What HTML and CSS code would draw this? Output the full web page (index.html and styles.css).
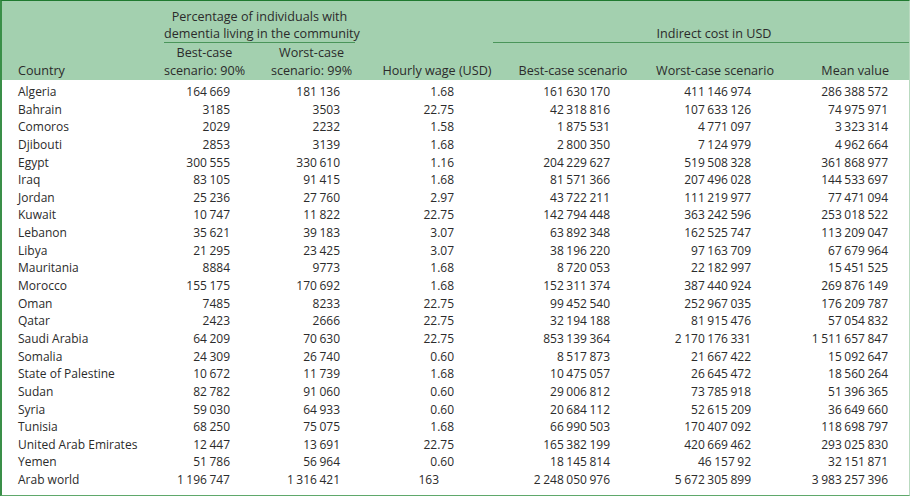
FILE: index.html
```html
<!DOCTYPE html>
<html>
<head>
<meta charset="utf-8">
<link rel="stylesheet" href="styles.css">
</head>
<body>
<div class="frame">
<table class="data">
<colgroup>
<col class="c0"><col class="c1"><col class="c2"><col class="c3"><col class="c4"><col class="c5"><col class="c6">
</colgroup>
<thead>
<tr class="hrow1">
<th rowspan="2" class="h-country">Country</th>
<th colspan="2" class="h-group"><div class="grp1">Percentage of individuals with<br>dementia living in the community</div></th>
<th rowspan="2" class="h-wage">Hourly wage (USD)</th>
<th colspan="3" class="h-group"><div class="grp2">Indirect cost in USD</div></th>
</tr>
<tr class="hrow2">
<th class="h-sub">Best-case<br>scenario: 90%</th>
<th class="h-sub">Worst-case<br>scenario: 99%</th>
<th class="h-sub">Best-case scenario</th>
<th class="h-sub">Worst-case scenario</th>
<th class="h-mean">Mean value</th>
</tr>
</thead>
<tbody>
<tr><td>Algeria</td><td>164 669</td><td>181 136</td><td>1.68</td><td>161 630 170</td><td>411 146 974</td><td>286 388 572</td></tr>
<tr><td>Bahrain</td><td>3185</td><td>3503</td><td>22.75</td><td>42 318 816</td><td>107 633 126</td><td>74 975 971</td></tr>
<tr><td>Comoros</td><td>2029</td><td>2232</td><td>1.58</td><td>1 875 531</td><td>4 771 097</td><td>3 323 314</td></tr>
<tr><td>Djibouti</td><td>2853</td><td>3139</td><td>1.68</td><td>2 800 350</td><td>7 124 979</td><td>4 962 664</td></tr>
<tr><td>Egypt</td><td>300 555</td><td>330 610</td><td>1.16</td><td>204 229 627</td><td>519 508 328</td><td>361 868 977</td></tr>
<tr><td>Iraq</td><td>83 105</td><td>91 415</td><td>1.68</td><td>81 571 366</td><td>207 496 028</td><td>144 533 697</td></tr>
<tr><td>Jordan</td><td>25 236</td><td>27 760</td><td>2.97</td><td>43 722 211</td><td>111 219 977</td><td>77 471 094</td></tr>
<tr><td>Kuwait</td><td>10 747</td><td>11 822</td><td>22.75</td><td>142 794 448</td><td>363 242 596</td><td>253 018 522</td></tr>
<tr><td>Lebanon</td><td>35 621</td><td>39 183</td><td>3.07</td><td>63 892 348</td><td>162 525 747</td><td>113 209 047</td></tr>
<tr><td>Libya</td><td>21 295</td><td>23 425</td><td>3.07</td><td>38 196 220</td><td>97 163 709</td><td>67 679 964</td></tr>
<tr><td>Mauritania</td><td>8884</td><td>9773</td><td>1.68</td><td>8 720 053</td><td>22 182 997</td><td>15 451 525</td></tr>
<tr><td>Morocco</td><td>155 175</td><td>170 692</td><td>1.68</td><td>152 311 374</td><td>387 440 924</td><td>269 876 149</td></tr>
<tr><td>Oman</td><td>7485</td><td>8233</td><td>22.75</td><td>99 452 540</td><td>252 967 035</td><td>176 209 787</td></tr>
<tr><td>Qatar</td><td>2423</td><td>2666</td><td>22.75</td><td>32 194 188</td><td>81 915 476</td><td>57 054 832</td></tr>
<tr><td>Saudi Arabia</td><td>64 209</td><td>70 630</td><td>22.75</td><td>853 139 364</td><td>2 170 176 331</td><td>1 511 657 847</td></tr>
<tr><td>Somalia</td><td>24 309</td><td>26 740</td><td>0.60</td><td>8 517 873</td><td>21 667 422</td><td>15 092 647</td></tr>
<tr><td>State of Palestine</td><td>10 672</td><td>11 739</td><td>1.68</td><td>10 475 057</td><td>26 645 472</td><td>18 560 264</td></tr>
<tr><td>Sudan</td><td>82 782</td><td>91 060</td><td>0.60</td><td>29 006 812</td><td>73 785 918</td><td>51 396 365</td></tr>
<tr><td>Syria</td><td>59 030</td><td>64 933</td><td>0.60</td><td>20 684 112</td><td>52 615 209</td><td>36 649 660</td></tr>
<tr><td>Tunisia</td><td>68 250</td><td>75 075</td><td>1.68</td><td>66 990 503</td><td>170 407 092</td><td>118 698 797</td></tr>
<tr><td>United Arab Emirates</td><td>12 447</td><td>13 691</td><td>22.75</td><td>165 382 199</td><td>420 669 462</td><td>293 025 830</td></tr>
<tr><td>Yemen</td><td>51 786</td><td>56 964</td><td>0.60</td><td>18 145 814</td><td>46 157 92</td><td>32 151 871</td></tr>
<tr><td>Arab world</td><td>1 196 747</td><td>1 316 421</td><td class="int">163</td><td>2 248 050 976</td><td>5 672 305 899</td><td>3 983 257 396</td></tr>
</tbody>
</table>
</div>
</body>
</html>
```

FILE: styles.css
```css
html, body {
  margin: 0;
  padding: 0;
  background: #ffffff;
}

.frame {
  width: 907px;
  height: 494px;
  border-top: 1px solid #1f7a30;
  border-left: 2px solid #3a8f48;
  border-right: 1px solid #b9dac0;
  border-bottom: 1px solid #5fa86b;
  background: #ffffff;
  overflow: hidden;
}

.data {
  width: 907px;
  table-layout: fixed;
  border-collapse: collapse;
  border-spacing: 0;
  font-family: "Open Sans", "Liberation Sans", sans-serif;
  font-size: 12px;
  color: #2b2b2b;
}

.c0 { width: 148px; }
.c1 { width: 109px; }
.c2 { width: 105px; }
.c3 { width: 129px; }
.c4 { width: 160px; }
.c5 { width: 124px; }
.c6 { width: 132px; }

thead th {
  background: #a3d0af;
  font-weight: normal;
  font-size: 12.6px;
  padding: 0;
  vertical-align: bottom;
  white-space: nowrap;
  line-height: 18px;
  color: #2b2b2b;
}

.hrow1 th {
  padding-top: 7px;
  line-height: 17px;
}

.hrow1 .h-country,
.hrow1 .h-wage {
  line-height: 18px;
}

.hrow2 th {
  padding-top: 1px;
}

.h-country {
  text-align: left;
  padding-left: 16px !important;
}

.h-wage {
  text-align: center;
  padding-left: 17px !important;
}

.h-group {
  text-align: center;
}

.grp1 {
  margin: 0 9px 0 14px;
  border-bottom: 1px solid #4a955a;
}

.grp2 {
  padding-left: 26px;
  border-bottom: 1px solid #4a955a;
}

.h-sub {
  text-align: center;
}

.h-mean {
  text-align: right;
  padding-right: 20px !important;
}

tbody td {
  padding: 0;
  line-height: 17.64px;
  height: 17.64px;
  white-space: nowrap;
  text-align: right;
  word-spacing: -0.6px;
}

tbody tr:first-child td {
  padding-top: 3px;
}

tbody td:nth-child(1) {
  text-align: left;
  padding-left: 16px;
  word-spacing: 0;
}

tbody td:nth-child(2) { padding-right: 29px; }
tbody td:nth-child(3) { padding-right: 24px; }
tbody td:nth-child(4) { padding-right: 39px; }
tbody td:nth-child(5) { padding-right: 43px; }
tbody td:nth-child(6) { padding-right: 26px; }
tbody td:nth-child(7) { padding-right: 21px; }

tbody td.int {
  padding-right: 54px;
}
```
